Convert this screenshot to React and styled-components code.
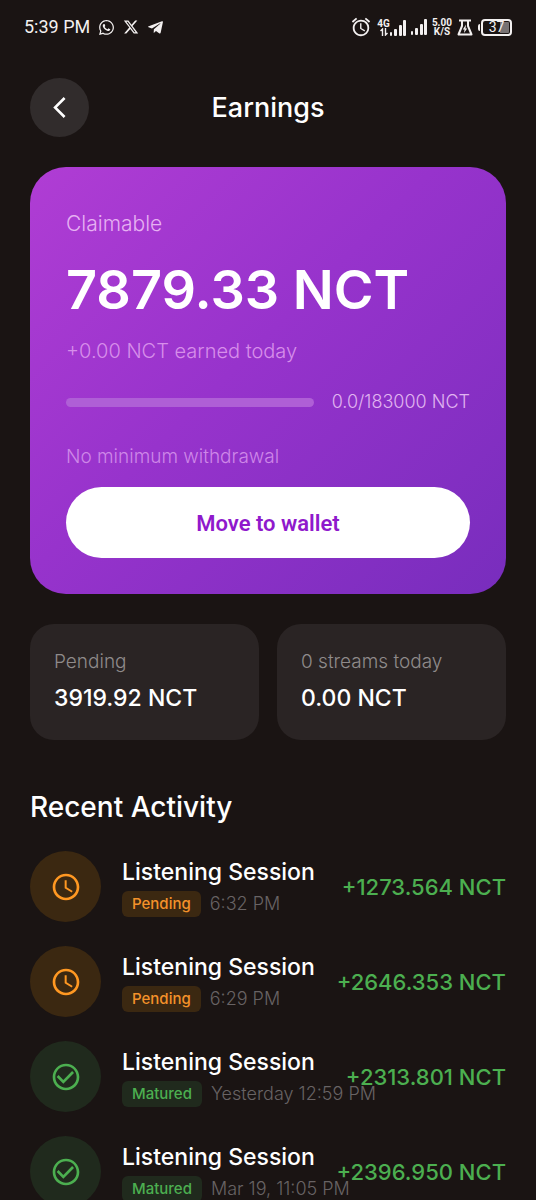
import React from 'react';
import styled, { createGlobalStyle } from 'styled-components';
import {
  MdAccessTime,
  MdAlarm,
  MdArrowBackIosNew,
  MdCheckCircleOutline,
} from 'react-icons/md';
import { FaTelegramPlane, FaWhatsapp } from 'react-icons/fa';
import { FaXTwitter } from 'react-icons/fa6';

const GlobalStyle = createGlobalStyle`
  * {
    box-sizing: border-box;
  }
  body {
    margin: 0;
    background: #1a1413;
    color: #fff;
    font-family: 'Inter', 'Liberation Sans', sans-serif;
  }
  h1, h2, h3, p, ul {
    margin: 0;
    padding: 0;
  }
`;

const Screen = styled.div`
  display: flex;
  flex-direction: column;
  height: 100vh;
  overflow-y: auto;
  scrollbar-width: none;
`;

const StatusBar = styled.div`
  display: flex;
  justify-content: space-between;
  align-items: center;
  flex-shrink: 0;
  height: 54px;
  padding: 0 24px;
  color: #f3f0f0;
  font-family: 'Roboto', sans-serif;
`;

const StatusGroup = styled.div`
  display: flex;
  align-items: center;
  gap: ${(props) => props.$gap}px;
`;

const Time = styled.span`
  font-size: 18px;
  line-height: 24px;
`;

const Network = styled.div`
  display: flex;
  align-items: flex-end;
`;

const Stacked = styled.div`
  display: flex;
  flex-direction: column;
  align-items: center;
  font-size: 10px;
  font-weight: 700;
  line-height: 9px;
`;

const BatteryBox = styled.div`
  display: flex;
  align-items: center;
  gap: 1px;

  &::before {
    content: '';
    width: 2px;
    height: 7px;
    border-radius: 2px 0 0 2px;
    background: #f3f0f0;
  }
`;

const BatteryLevel = styled.span`
  width: 31px;
  height: 17px;
  border: 2px solid #f3f0f0;
  border-radius: 4px;
  background: linear-gradient(90deg, transparent 63%, #777273 63%) content-box;
  padding: 1px;
  font-size: 14px;
  line-height: 11px;
  text-align: center;
`;

const Header = styled.header`
  display: grid;
  grid-template-columns: 59px 1fr 59px;
  align-items: center;
  padding: 24px 30px 30px;
`;

const BackButton = styled.button`
  display: flex;
  align-items: center;
  justify-content: center;
  width: 59px;
  height: 59px;
  padding: 0;
  border: 0;
  border-radius: 50%;
  background: #312c2c;
  color: #fff;
  cursor: pointer;
`;

const PageTitle = styled.h1`
  font-size: 27px;
  font-weight: 500;
  line-height: 36px;
  text-align: center;
`;

const Content = styled.main`
  padding: 0 30px 30px;
`;

const ClaimCard = styled.section`
  padding: 36px;
  border-radius: 36px;
  background: linear-gradient(135deg, #b03dd4 0%, #9733cc 45%, #782dbd 100%);
`;

const ClaimLabel = styled.h2`
  color: #e6b1f2;
  font-size: 21px;
  font-weight: 300;
  line-height: 42px;
`;

const Balance = styled.p`
  margin-top: 12px;
  font-size: 54px;
  font-weight: 600;
  line-height: 66px;
  white-space: nowrap;
`;

const Earned = styled.p`
  margin-top: 14px;
  color: #d78eea;
  font-size: 20px;
  font-weight: 300;
  line-height: 28px;
`;

const ProgressRow = styled.div`
  display: flex;
  align-items: center;
  gap: 18px;
  margin-top: 23px;
`;

const Track = styled.div`
  flex: 1;
  height: 9px;
  border-radius: 5px;
  background: #af5fd6;
  overflow: hidden;
`;

const Fill = styled.div`
  height: 100%;
  background: #fff;
`;

const ProgressText = styled.span`
  color: #e0b4f0;
  font-size: 18px;
  font-weight: 300;
  line-height: 28px;
`;

const Note = styled.p`
  margin-top: 27px;
  color: #ce87e8;
  font-size: 19px;
  font-weight: 300;
  line-height: 28px;
`;

const WalletButton = styled.button`
  display: block;
  width: 100%;
  height: 71px;
  margin-top: 16px;
  padding: 2px 0 0;
  border: 0;
  border-radius: 36px;
  background: #fff;
  color: #8f19cc;
  font-family: 'Roboto', sans-serif;
  font-size: 22px;
  font-weight: 600;
  cursor: pointer;
`;

const Stats = styled.div`
  display: grid;
  grid-template-columns: 1fr 1fr;
  gap: 18px;
  margin-top: 30px;
`;

const StatCard = styled.section`
  padding: 24px 24px 26px;
  border-radius: 24px;
  background: #2a2424;
`;

const StatLabel = styled.h3`
  color: #8f8b8b;
  font-size: 19px;
  font-weight: 300;
  line-height: 28px;
`;

const StatValue = styled.p`
  margin-top: 6px;
  font-size: 23px;
  font-weight: 500;
  line-height: 32px;
`;

const SectionTitle = styled.h2`
  margin-top: 49px;
  font-size: 28px;
  font-weight: 500;
  line-height: 36px;
`;

const ActivityList = styled.ul`
  display: flex;
  flex-direction: column;
  gap: 24px;
  margin-top: 26px;
  list-style: none;
`;

const Row = styled.li`
  display: flex;
  align-items: center;
  height: 71px;
`;

const StatusIcon = styled.div`
  display: flex;
  align-items: center;
  justify-content: center;
  flex-shrink: 0;
  width: 71px;
  height: 71px;
  margin-right: 21px;
  border-radius: 50%;
  background: ${(props) => (props.$matured ? '#202a1d' : '#3b2811')};
  color: ${(props) => (props.$matured ? '#4caf50' : '#ff9822')};
`;

const Details = styled.div`
  flex: 1;
  min-width: 0;
  white-space: nowrap;
`;

const SessionTitle = styled.h3`
  font-size: 23px;
  font-weight: 500;
  line-height: 30px;
`;

const Meta = styled.div`
  display: flex;
  align-items: center;
  gap: 9px;
  margin-top: 4px;
`;

const Badge = styled.span`
  padding: 0 10px;
  border-radius: 6px;
  background: ${(props) => (props.$matured ? '#202a1d' : '#3b2811')};
  color: ${(props) => (props.$matured ? '#4caf50' : '#f4922a')};
  font-size: 15px;
  font-weight: 500;
  line-height: 26px;
`;

const When = styled.span`
  color: #686364;
  font-size: 18px;
  font-weight: 300;
  line-height: 26px;
`;

const Amount = styled.span`
  color: #4caf50;
  font-size: 22px;
  font-weight: 500;
  line-height: 30px;
  white-space: nowrap;
`;

const activities = [
  { id: 1, status: 'Pending', when: '6:32 PM', amount: '+1273.564 NCT' },
  { id: 2, status: 'Pending', when: '6:29 PM', amount: '+2646.353 NCT' },
  { id: 3, status: 'Matured', when: 'Yesterday 12:59 PM', amount: '+2313.801 NCT' },
  { id: 4, status: 'Matured', when: 'Mar 19, 11:05 PM', amount: '+2396.950 NCT' },
];

const claimed = 0;
const target = 183000;

const SignalBars = () => (
  <svg width="16" height="16" viewBox="0 0 16 16" fill="currentColor" aria-hidden="true">
    <rect x="0" y="12" width="2" height="4" rx="1" />
    <rect x="4" y="9" width="3" height="7" rx="1" />
    <rect x="9" y="5" width="3" height="11" rx="1" />
    <rect x="13" y="0" width="3" height="16" rx="1" />
  </svg>
);

const DataArrows = () => (
  <svg width="8" height="8" viewBox="0 0 8 8" fill="none" stroke="currentColor" strokeWidth="1.4" aria-hidden="true">
    <path d="M2.5 8V1L.5 3M5.5 0v7l2-2" />
  </svg>
);

const Flask = () => (
  <svg width="16" height="17" viewBox="0 0 16 17" fill="none" stroke="currentColor" strokeWidth="2" aria-hidden="true">
    <path d="M2 1.5h12M5 2v5L1.5 15.5h13L11 7V2" strokeLinejoin="round" />
    <path d="M9 5.5 5.8 10.5h1.7L7 14l3.2-4.500H8.500z" fill="currentColor" stroke="none" />
  </svg>
);

const ActivityRow = ({ status, when, amount }) => {
  const matured = status === 'Matured';
  return (
    <Row>
      <StatusIcon $matured={matured}>
        {matured ? <MdCheckCircleOutline size={32} /> : <MdAccessTime size={32} />}
      </StatusIcon>
      <Details>
        <SessionTitle>Listening Session</SessionTitle>
        <Meta>
          <Badge $matured={matured}>{status}</Badge>
          <When>{when}</When>
        </Meta>
      </Details>
      <Amount>{amount}</Amount>
    </Row>
  );
};

const App = () => (
  <>
    <GlobalStyle />
    <Screen>
      <StatusBar>
        <StatusGroup $gap={8}>
          <Time>5:39 PM</Time>
          <FaWhatsapp size={17} />
          <FaXTwitter size={16} />
          <FaTelegramPlane size={17} />
        </StatusGroup>
        <StatusGroup $gap={5}>
          <MdAlarm size={22} />
          <Network>
            <Stacked>
              4G
              <DataArrows />
            </Stacked>
            <SignalBars />
          </Network>
          <SignalBars />
          <Stacked>
            <span>5.00</span>
            <span>K/S</span>
          </Stacked>
          <Flask />
          <BatteryBox>
            <BatteryLevel>37</BatteryLevel>
          </BatteryBox>
        </StatusGroup>
      </StatusBar>
      <Header>
        <BackButton aria-label="Back">
          <MdArrowBackIosNew size={25} />
        </BackButton>
        <PageTitle>Earnings</PageTitle>
      </Header>
      <Content>
        <ClaimCard>
          <ClaimLabel>Claimable</ClaimLabel>
          <Balance>7879.33 NCT</Balance>
          <Earned>+0.00 NCT earned today</Earned>
          <ProgressRow>
            <Track>
              <Fill style={{ width: `${(claimed / target) * 100}%` }} />
            </Track>
            <ProgressText>{`${claimed.toFixed(1)}/${target} NCT`}</ProgressText>
          </ProgressRow>
          <Note>No minimum withdrawal</Note>
          <WalletButton>Move to wallet</WalletButton>
        </ClaimCard>
        <Stats>
          <StatCard>
            <StatLabel>Pending</StatLabel>
            <StatValue>3919.92 NCT</StatValue>
          </StatCard>
          <StatCard>
            <StatLabel>0 streams today</StatLabel>
            <StatValue>0.00 NCT</StatValue>
          </StatCard>
        </Stats>
        <SectionTitle>Recent Activity</SectionTitle>
        <ActivityList>
          {activities.map((item) => (
            <ActivityRow key={item.id} {...item} />
          ))}
        </ActivityList>
      </Content>
    </Screen>
  </>
);

export default App;
